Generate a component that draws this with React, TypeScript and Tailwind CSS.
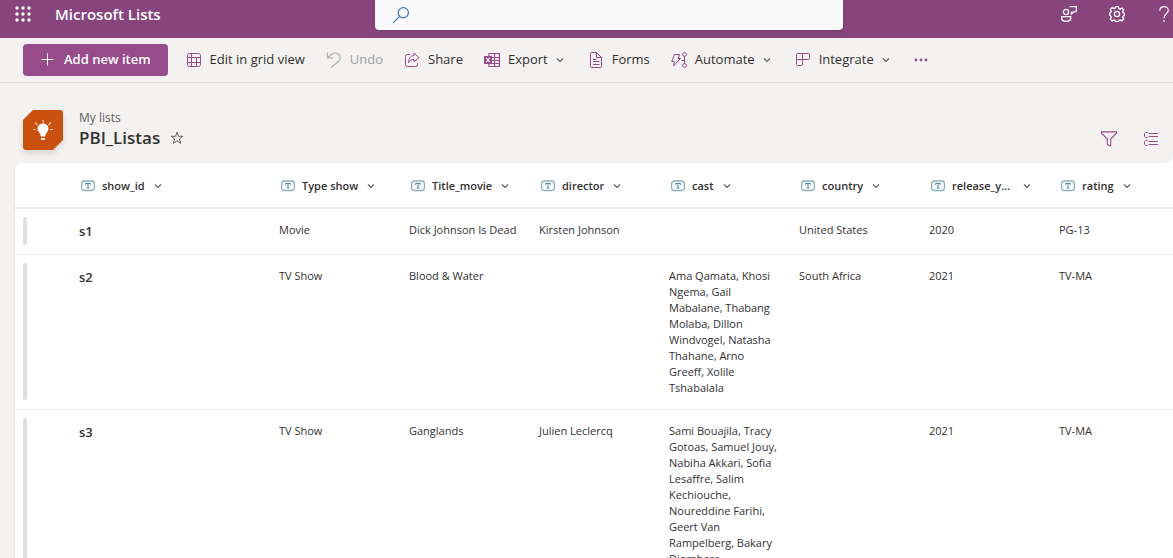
import React from "react";

type IconProps = { className?: string };

const strokeProps = {
  viewBox: "0 0 16 16",
  width: 16,
  height: 16,
  fill: "none",
  stroke: "currentColor",
  strokeWidth: 1,
  "aria-hidden": true,
} as const;

const WaffleIcon = () => (
  <svg width="16" height="16" viewBox="0 0 16 16" fill="currentColor" aria-hidden="true">
    {[2, 8, 14].map((y) => [2, 8, 14].map((x) => <circle key={`${x}-${y}`} cx={x} cy={y} r="1.7" />))}
  </svg>
);

const SearchIcon = () => (
  <svg {...strokeProps} strokeWidth={1.2}>
    <circle cx="10.3" cy="5.7" r="5.1" />
    <path d="M6.6 9.4 0.4 15.6" />
  </svg>
);

const FeedbackIcon = () => (
  <svg {...strokeProps} strokeWidth={1.3}>
    <circle cx="5" cy="6" r="2.6" />
    <path d="M.7 10.7h9v1.5c0 2-1.9 3.100-4.500 3.100S.7 14.200.7 12.200z" />
    <path d="M8.700.7h6.700v5h-2.700l-2.300 2.200V5.700" />
  </svg>
);

const GearIcon = () => (
  <svg {...strokeProps} strokeWidth={1.3}>
    <path d="M6.600.7h2.800l.4 1.900 1.300.5 1.700-1.100 2 2-1.100 1.700.5 1.300 1.200.4v2.200l-1.200.4-.5 1.300 1.100 1.700-2 2-1.700-1.100-1.300.5-.4 1.200H6.600l-.4-1.200-1.300-.5-1.700 1.100-2-2 1.100-1.700-.5-1.300L.7 9.100V6.900l1.100-.4.5-1.300-1.100-1.700 2-2 1.700 1.100 1.300-.5z" strokeLinejoin="round" />
    <circle cx="8" cy="8" r="2.6" />
  </svg>
);

const HelpIcon = () => (
  <svg width="12" height="16" viewBox="-2.5 0 12 16" fill="none" stroke="currentColor" strokeWidth="1.2" aria-hidden="true">
    <path d="M.3 4.700C.3 2.200 2.100.6 4.500.6s4.300 1.500 4.300 3.900C8.800 7.600 4.600 7.900 4.600 11.400v.8" />
    <path d="M4.600 14.300v1.500" strokeWidth="1.500" />
  </svg>
);

const PlusIcon = () => (
  <svg {...strokeProps}>
    <path d="M7.500 1.500v12M1.500 7.500h12" />
  </svg>
);

const GridIcon = () => (
  <svg {...strokeProps}>
    <rect x="1.500" y="1.500" width="13" height="13" rx="2" />
    <path d="M5.500 1.500v13M10.500 5.500v9M1.500 5.500h13M1.500 10.500h13" />
  </svg>
);

const UndoIcon = () => (
  <svg {...strokeProps} strokeWidth={1.200}>
    <path d="M1.500.5v5.500h5.500" />
    <path d="M1.500 6 5.800 2.200C8.500.2 12 .8 13.500 3.200c1.300 2.200.8 4.400-.8 6L5 15.600" />
  </svg>
);

const ShareIcon = () => (
  <svg {...strokeProps}>
    <path d="M6 2.500H3.500a2 2 0 0 0-2 2v8a2 2 0 0 0 2 2h8a2 2 0 0 0 2-2V11" />
    <path d="M10 1.200 15 5.500 10 9.800V7.500C7.500 7.300 5.800 8.500 4.500 10.700 4.700 6.500 6.500 3.700 10 3.500z" strokeLinejoin="round" />
  </svg>
);

const ExcelIcon = () => (
  <svg {...strokeProps} strokeWidth={1.2}>
    <path d="M5 4V1.500h10.400v13H5V12M10.500 1.500v13M8 5.500h7.500M8 8.500h7.500M8 11.500h7.500" />
    <rect x="0" y="4" width="8" height="8" fill="currentColor" stroke="none" />
    <path d="m2.200 5.800 3.600 4.400M5.800 5.800 2.200 10.200" stroke="#f3f2f1" />
  </svg>
);

const FormsIcon = () => (
  <svg {...strokeProps}>
    <path d="M8.500.5h-5a1 1 0 0 0-1 1v13a1 1 0 0 0 1 1h9a1 1 0 0 0 1-1v-9z" strokeLinejoin="round" />
    <path d="M8.500.5v5h5M5 7.500h3.500M5 9.500h6.500M5 12.500h6.500" />
  </svg>
);

const AutomateIcon = () => (
  <svg {...strokeProps}>
    <path d="M3.500 2.500h5L7 6.500h2.500L2.500 14l1-4.500H.7z" strokeLinejoin="round" />
    <circle cx="13.500" cy="2.500" r="1.900" />
    <circle cx="13.500" cy="13.500" r="1.900" />
    <path d="M13.500 4.400v7.200M10.500 8.500h3" />
  </svg>
);

const IntegrateIcon = () => (
  <svg {...strokeProps}>
    <path d="M2.500 1.500h11a1 1 0 0 1 1 1v4a1 1 0 0 1-1 1h-12v-5a1 1 0 0 1 1-1zM1.500 7.500v5a1 1 0 0 0 1 1h4a1 1 0 0 0 1-1v-11" />
  </svg>
);

const MoreIcon = () => (
  <svg width="14" height="16" viewBox="0 0 14 16" fill="currentColor" aria-hidden="true">
    <circle cx="2" cy="8" r="1.400" />
    <circle cx="7" cy="8" r="1.400" />
    <circle cx="12" cy="8" r="1.400" />
  </svg>
);

const ChevronIcon = ({ className }: IconProps) => (
  <svg width="8" height="8" viewBox="0 0 8 8" fill="none" stroke="currentColor" strokeWidth="1.2" className={className} aria-hidden="true">
    <path d="m1 2.500 3 3 3-3" />
  </svg>
);

const StarIcon = () => (
  <svg width="14" height="14" viewBox="0 0 14 14" fill="none" stroke="currentColor" strokeWidth="1" aria-hidden="true">
    <path d="m7 1.300 1.500 4h4.300L9.400 7.900l1.300 4.500L7 9.800l-3.700 2.600 1.300-4.500L1.200 5.300h4.300z" />
  </svg>
);

const FilterIcon = () => (
  <svg {...strokeProps} strokeWidth={1.100}>
    <path d="M.5.900h15v1.300L9.700 8v6.800H8.300L6.300 13V8L.5 2.200z" />
  </svg>
);

const DetailsIcon = () => (
  <svg {...strokeProps}>
    <path d="M5.500 2.500H15M5.500 5.500H15M5.500 10.500H15M5.500 13.500H15" />
    <path d="M4.500 1.500h-2l-1 1v3l1 1h2M4.500 9.500h-2l-1 1v3l1 1h2" />
  </svg>
);

const TextColumnIcon = () => (
  <svg width="14" height="12" viewBox="0 0 14 12" fill="none" aria-hidden="true">
    <rect x=".6" y="1" width="12.800" height="9.500" rx="2.600" stroke="#8aaebd" strokeWidth="1.300" />
    <path d="M4.500 4.800V3.500h5v1.300M7 3.500v4.500M5.700 8h2.600" stroke="#4a86a8" strokeWidth="1" />
  </svg>
);

const ListLogo = () => (
  <svg width="40" height="40" viewBox="0 0 40 40" className="drop-shadow-md" aria-hidden="true">
    <path d="M10 0h27a3 3 0 0 1 3 3v27L30 40H3a3 3 0 0 1-3-3V10z" fill="#ca5010" />
    <path d="M20 13.500c-3.200 0-5.500 2.300-5.500 5.200 0 2.300 1.800 3.700 2.700 5.300l.6 2.500h4.400l.6-2.500c.9-1.600 2.700-3 2.700-5.300 0-2.900-2.300-5.200-5.500-5.200zM18 28h4v.8a1.200 1.200 0 0 1-1.200 1.200h-1.600a1.200 1.200 0 0 1-1.200-1.200z" fill="#fff" />
    <path d="M20 10v2.500M12 12.500l2.500 2.500M28 12.500 25.500 15M10 19.500h3M27 19.500h3" stroke="#f3c9b0" strokeWidth="1.200" />
  </svg>
);

type Command = { label: string; icon: React.ReactNode; menu?: boolean; disabled?: boolean };

const commands: Command[] = [
  { label: "Edit in grid view", icon: <GridIcon /> },
  { label: "Undo", icon: <UndoIcon />, disabled: true },
  { label: "Share", icon: <ShareIcon /> },
  { label: "Export", icon: <ExcelIcon />, menu: true },
  { label: "Forms", icon: <FormsIcon /> },
  { label: "Automate", icon: <AutomateIcon />, menu: true },
  { label: "Integrate", icon: <IntegrateIcon />, menu: true },
];

const columns = ["show_id", "Type show", "Title_movie", "director", "cast", "country", "release_year", "rating"];

const rows: string[][] = [
  ["s1", "Movie", "Dick Johnson Is Dead", "Kirsten Johnson", "", "United States", "2020", "PG-13"],
  [
    "s2",
    "TV Show",
    "Blood & Water",
    "",
    "Ama Qamata, Khosi Ngema, Gail Mabalane, Thabang Molaba, Dillon Windvogel, Natasha Thahane, Arno Greeff, Xolile Tshabalala",
    "South Africa",
    "2021",
    "TV-MA",
  ],
  [
    "s3",
    "TV Show",
    "Ganglands",
    "Julien Leclercq",
    "Sami Bouajila, Tracy Gotoas, Samuel Jouy, Nabiha Akkari, Sofia Lesaffre, Salim Kechiouche, Noureddine Farihi, Geert Van Rampelberg, Bakary Diombera",
    "",
    "2021",
    "TV-MA",
  ],
];

function SuiteHeader() {
  return (
    <header className="grid h-[38px] shrink-0 grid-cols-[375px_minmax(0,1fr)_330px] bg-[#87447d] text-white">
      <div className="flex h-7 items-center gap-6 pl-[15px]">
        <button type="button" aria-label="App launcher">
          <WaffleIcon />
        </button>
        <a href="#" className="text-[15px] font-semibold">
          Microsoft Lists
        </a>
      </div>
      <label className="flex h-[30px] items-center gap-2 rounded-b bg-[#fafafa] pl-[18px] text-[#3b6fc4] shadow">
        <SearchIcon />
        <input type="search" aria-label="Search" className="min-w-0 flex-1 bg-transparent text-sm text-[#323130] outline-none" />
      </label>
      <div className="flex h-7 items-center justify-end gap-8 pr-1">
        <button type="button" aria-label="Feedback">
          <FeedbackIcon />
        </button>
        <button type="button" aria-label="Settings">
          <GearIcon />
        </button>
        <button type="button" aria-label="Help">
          <HelpIcon />
        </button>
      </div>
    </header>
  );
}

function CommandBar() {
  return (
    <div role="toolbar" aria-label="List commands" className="flex h-[45px] shrink-0 items-center gap-[21px] border-b border-[#dddcdb] pl-[23px] text-[13px]">
      <button type="button" className="-mr-[3px] flex h-8 items-center gap-2 rounded bg-[#984b8b] px-[17px] font-semibold whitespace-nowrap text-white">
        <PlusIcon />
        Add new item
      </button>
      {commands.map((c) => (
        <button
          key={c.label}
          type="button"
          disabled={c.disabled}
          className={`flex items-center gap-2 whitespace-nowrap text-[#323130] disabled:text-[#a19f9d] ${c.menu ? "pr-[3px]" : ""}`}
        >
          <span className={c.disabled ? "text-[#b0aeac]" : "text-[#984b8b]"}>{c.icon}</span>
          {c.label}
          {c.menu && <ChevronIcon className="text-[#605e5c]" />}
        </button>
      ))}
      <button type="button" aria-label="More" className="text-[#984b8b]">
        <MoreIcon />
      </button>
    </div>
  );
}

function ListHeader() {
  return (
    <div className="shrink-0 bg-white">
      <div className="flex h-20 items-center gap-4 rounded-br-lg bg-[#f3f2f1] pt-[14px] pr-[14px] pl-[23px]">
        <ListLogo />
        <div className="flex flex-col">
          <a href="#" className="text-xs leading-4 text-[#605e5c]">
            My lists
          </a>
          <div className="flex items-center gap-[10px]">
            <h1 className="text-[17px] leading-6 font-semibold text-[#323130]">PBI_Listas</h1>
            <button type="button" aria-label="Favorite" className="text-[#605e5c]">
              <StarIcon />
            </button>
          </div>
        </div>
        <div className="ml-auto flex items-center gap-[26px] self-end pb-4 text-[#984b8b]">
          <button type="button" aria-label="Filter">
            <FilterIcon />
          </button>
          <button type="button" aria-label="Details">
            <DetailsIcon />
          </button>
        </div>
      </div>
    </div>
  );
}

function ListTable() {
  return (
    <div className="min-h-0 flex-1 bg-[#f3f2f1] pl-[15px]">
      <div className="h-full overflow-hidden rounded-tl-lg bg-white shadow">
        <table className="w-full table-fixed border-separate border-spacing-0 text-left text-[11px] text-[#323130]">
          <colgroup>
            <col className="w-14" />
            <col className="w-[200px]" />
            <col className="w-[130px]" />
            <col className="w-[130px]" />
            <col className="w-[130px]" />
            <col className="w-[130px]" />
            <col className="w-[130px]" />
            <col className="w-[130px]" />
            <col />
          </colgroup>
          <thead>
            <tr className="h-[46px]">
              <td className="border-b-2 border-[#eaeaea]" />
              {columns.map((name) => (
                <th key={name} scope="col" className="border-b-2 border-[#eaeaea] px-2 pt-[2px] font-semibold">
                  <button type="button" className="flex w-full items-center gap-[7px] pl-[2px] font-semibold">
                    <span className="shrink-0">
                      <TextColumnIcon />
                    </span>
                    <span className="max-w-[62px] truncate">{name}</span>
                    <ChevronIcon className="ml-[2px] shrink-0 text-[#605e5c]" />
                  </button>
                </th>
              ))}
            </tr>
          </thead>
          <tbody>
            {rows.map(([id, ...cells]) => (
              <tr key={id} className="h-[46px]">
                <td className="h-px border-b border-[#f0f0f0] pt-2 pb-[9px] pl-2">
                  <div className="h-full w-1 rounded-sm bg-[#e1dfdd]" />
                </td>
                <th scope="row" className="border-b border-[#f0f0f0] px-2 py-[13px] align-top text-[13px] leading-[18px] font-semibold">
                  {id}
                </th>
                {cells.map((text, i) => (
                  <td key={i} className="border-b border-[#f0f0f0] py-[13px] pr-[10px] pl-2 align-top leading-4">
                    {text}
                  </td>
                ))}
              </tr>
            ))}
          </tbody>
        </table>
      </div>
    </div>
  );
}

export default function App() {
  return (
    <div className="flex h-screen flex-col overflow-hidden bg-[#f3f2f1] font-['Open_Sans','Noto_Sans',sans-serif]">
      <SuiteHeader />
      <CommandBar />
      <ListHeader />
      <ListTable />
    </div>
  );
}
